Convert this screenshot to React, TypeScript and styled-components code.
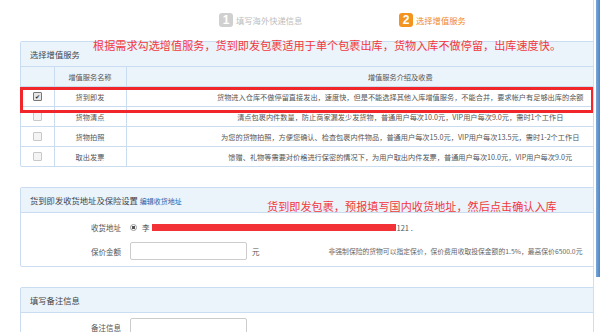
import styled, { createGlobalStyle } from 'styled-components';

type Service = {
  name: string;
  desc: string;
  checked: boolean;
};

const services: Service[] = [
  {
    name: '货到即发',
    desc: '货物进入仓库不做停留直接发出，速度快，但是不能选择其他入库增值服务，不能合并，要求帐户有足够出库的余额',
    checked: true,
  },
  {
    name: '货物清点',
    desc: '清点包裹内件数量，防止商家漏发少发货物，普通用户每次10.0元，VIP用户每次9.0元，需时1个工作日',
    checked: false,
  },
  {
    name: '货物拍照',
    desc: '为您的货物拍照，方便您确认、检查包裹内件物品，普通用户每次15.0元，VIP用户每次13.5元，需时1-2个工作日',
    checked: false,
  },
  {
    name: '取出发票',
    desc: '馈赠、礼物等需要对价格进行保密的情况下，为用户取出内件发票，普通用户每次10.0元，VIP用户每次9.0元',
    checked: false,
  },
];

const GlobalStyle = createGlobalStyle`
  html, body {
    margin: 0;
    padding: 0;
    background: #fff;
    overflow: hidden;
  }
  body {
    font-family: "Noto Sans CJK SC", "Noto Sans", Arial, sans-serif;
    color: #444;
  }
`;

export default function App() {
  return (
    <>
      <GlobalStyle />
      <Page>
        <Steps>
          <Step>
            <StepBadge active={false}>1</StepBadge>
            <StepText active={false}>填写海外快递信息</StepText>
          </Step>
          <Step>
            <StepBadge active>2</StepBadge>
            <StepText active>选择增值服务</StepText>
          </Step>
        </Steps>

        <Panel>
          <PanelHeader>选择增值服务</PanelHeader>
          <Table>
            <colgroup>
              <col style={{ width: 33 }} />
              <col style={{ width: 72 }} />
              <col />
            </colgroup>
            <thead>
              <tr>
                <Th />
                <Th>增值服务名称</Th>
                <Th>增值服务介绍及收费</Th>
              </tr>
            </thead>
            <tbody>
              {services.map(item => (
                <tr key={item.name}>
                  <Td>
                    <Check checked={item.checked}>{item.checked ? '✔' : ''}</Check>
                  </Td>
                  <Td>{item.name}</Td>
                  <Td>{item.desc}</Td>
                </tr>
              ))}
            </tbody>
          </Table>
          <Note style={{ left: 72, top: -4 }}>
            根据需求勾选增值服务，货到即发包裹适用于单个包裹出库，货物入库不做停留，出库速度快。
          </Note>
          <HighlightBox />
        </Panel>

        <Panel>
          <PanelHeader>
            货到即发收货地址及保险设置 <HeaderLink>编辑收货地址</HeaderLink>
          </PanelHeader>
          <FormBody>
            <FormRow>
              <Label>收货地址</Label>
              <Radio />
              <AddressText>
                李<Redacted />121 .
              </AddressText>
            </FormRow>
            <FormRow>
              <Label>保价金额</Label>
              <Input />
              <Unit>元</Unit>
              <Hint>非强制保险的货物可以指定保价，保价费用收取投保金额的1.5%，最高保价6500.0元</Hint>
            </FormRow>
          </FormBody>
          <Note style={{ left: 246, top: 11 }}>货到即发包裹，预报填写国内收货地址，然后点击确认入库</Note>
        </Panel>

        <Panel>
          <PanelHeader>填写备注信息</PanelHeader>
          <FormBody>
            <FormRow>
              <Label>备注信息</Label>
              <Input />
            </FormRow>
          </FormBody>
        </Panel>
      </Page>
      <ScrollTrack>
        <ScrollThumb />
      </ScrollTrack>
    </>
  );
}

const Page = styled.div`
  width: 655px;
  padding-left: 20px;
`;

const Steps = styled.div`
  display: flex;
  padding-left: 199px;
  height: 41px;
  padding-top: 13px;
  box-sizing: border-box;
`;

const Step = styled.div`
  width: 180px;
  display: flex;
  align-items: center;
  gap: 3px;
  height: 14px;
`;

const StepBadge = styled.span<{ active: boolean }>`
  width: 14px;
  height: 14px;
  border-radius: 3px;
  background: ${p => (p.active ? '#f39320' : '#d0d0d0')};
  color: #fff;
  font-family: Arial, "Liberation Sans", sans-serif;
  font-weight: bold;
  font-size: 12px;
  line-height: 14px;
  text-align: center;
`;

const StepText = styled.span<{ active: boolean }>`
  font-size: 8.3px;
  color: ${p => (p.active ? '#f08a24' : '#bdbdbd')};
`;

const Panel = styled.div`
  position: relative;
  border: 1px solid #cadcf0;
  border-radius: 2px;
  margin-bottom: 20px;
`;

const PanelHeader = styled.div`
  height: 24px;
  line-height: 24px;
  padding-left: 9px;
  background: #ebf3fb;
  border-bottom: 1px solid #cadcf0;
  font-size: 8.3px;
  color: #444;
`;

const HeaderLink = styled.span`
  font-size: 7px;
  color: #2b5ea8;
`;

const Table = styled.table`
  width: 100%;
  border-collapse: collapse;
  table-layout: fixed;
`;

const Th = styled.th`
  height: 19px;
  background: #ebf3fb;
  border: 1px solid #cadcf0;
  border-top: none;
  font-weight: normal;
  font-size: 7.2px;
  color: #555;
  text-align: center;
  padding: 0;
  &:first-child {
    border-left: none;
  }
  &:last-child {
    border-right: none;
  }
`;

const Td = styled.td`
  height: 19px;
  border: 1px solid #cadcf0;
  font-size: 7.2px;
  color: #555;
  text-align: center;
  padding: 0;
  white-space: nowrap;
  &:first-child {
    border-left: none;
  }
  &:last-child {
    border-right: none;
  }
  tr:last-child > & {
    border-bottom: none;
  }
`;

const Check = styled.span<{ checked: boolean }>`
  display: inline-block;
  width: 7px;
  height: 7px;
  border: 1px solid ${p => (p.checked ? '#777' : '#c8c8c8')};
  border-radius: 1px;
  background: ${p => (p.checked ? '#e6e6e6' : '#f4f4f4')};
  color: #222;
  font-size: 6px;
  line-height: 7px;
  text-align: center;
  vertical-align: middle;
  margin-top: -3px;
`;

const Note = styled.div`
  position: absolute;
  font-size: 11.1px;
  line-height: 14px;
  letter-spacing: 0.05px;
  color: #f2383c;
  white-space: nowrap;
`;

const HighlightBox = styled.div`
  position: absolute;
  left: -1px;
  top: 45px;
  width: 568px;
  height: 20px;
  border: 3px solid #f0262b;
`;

const FormBody = styled.div`
  display: flex;
  flex-direction: column;
  padding: 4px 0 5px;
  gap: 4px;
`;

const FormRow = styled.div`
  display: flex;
  align-items: center;
  min-height: 20px;
`;

const Label = styled.div`
  width: 100px;
  text-align: right;
  font-size: 7.5px;
  color: #555;
  margin-right: 9px;
`;

const Radio = styled.span`
  width: 5px;
  height: 5px;
  border-radius: 50%;
  border: 1px solid #999;
  background: radial-gradient(circle, #555 0 1.5px, #fff 2px);
  margin-right: 5px;
`;

const AddressText = styled.div`
  display: flex;
  align-items: center;
  font-size: 7.5px;
  color: #555;
`;

const Redacted = styled.span`
  display: inline-block;
  width: 244px;
  height: 7px;
  background: #f33238;
  margin: 0 1px 0 2px;
`;

const Input = styled.div`
  width: 115px;
  height: 16px;
  border: 1px solid #ccc;
  border-radius: 2px;
  background: #fff;
`;

const Unit = styled.span`
  font-size: 7.5px;
  color: #555;
  margin-left: 5px;
`;

const Hint = styled.span`
  font-size: 6.8px;
  color: #666;
  margin-left: 69px;
  white-space: nowrap;
`;

const ScrollTrack = styled.div`
  position: fixed;
  top: 0;
  right: 0;
  width: 6px;
  height: 100%;
  background: #fff;
  border-left: 1px solid #dcdcdc;
`;

const ScrollThumb = styled.div`
  margin-left: 2px;
  width: 4px;
  height: 277px;
  background: linear-gradient(to right, #7aa7d8, #4f85c4);
`;
